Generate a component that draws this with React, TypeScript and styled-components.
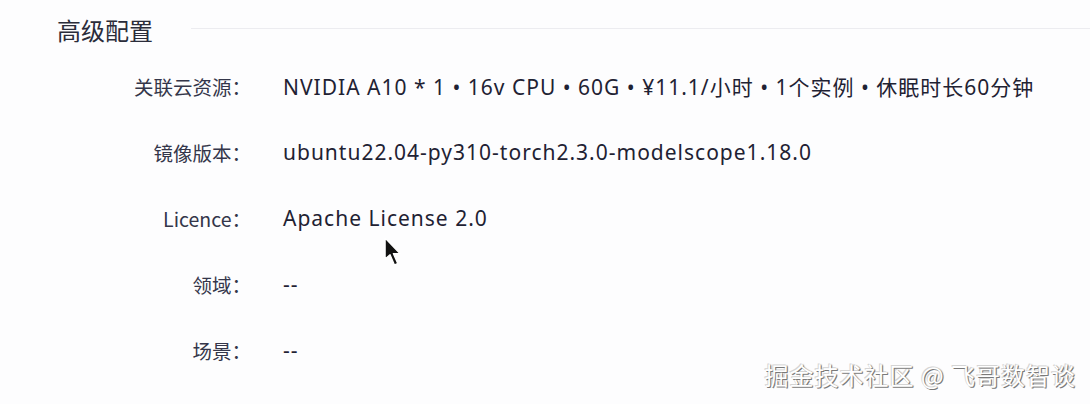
import React from "react";
import styled, { createGlobalStyle } from "styled-components";

const GlobalStyle = createGlobalStyle`
  html, body {
    margin: 0;
    padding: 0;
    background: #fdfdfe;
  }
  body {
    font-family: "Noto Sans", "Noto Sans CJK SC", sans-serif;
    color: #1f2233;
  }
`;

const Page = styled.div`
  position: relative;
  width: 1090px;
  height: 404px;
  overflow: hidden;
  background: #fdfdfe;
`;

const Header = styled.div`
  display: flex;
  align-items: center;
  height: 32px;
  padding: 14px 0 0 57px;
`;

const Title = styled.h2`
  margin: 0;
  font-family: "Noto Sans CJK SC", sans-serif;
  font-size: 24px;
  font-weight: 400;
  line-height: 32px;
  color: #2a2c3a;
`;

const Divider = styled.div`
  flex: 1;
  height: 1px;
  margin: -3px 0 0 38px;
  background: #ececf0;
`;

const Fields = styled.dl`
  display: grid;
  grid-template-columns: 251px 1fr;
  column-gap: 32px;
  grid-auto-rows: 66px;
  margin: 7px 0 0;
`;

const Label = styled.dt`
  display: flex;
  align-items: center;
  justify-content: flex-end;
  font-family: "Noto Sans CJK SC", sans-serif;
  font-size: 19.5px;
  color: #34364a;
`;

const Value = styled.dd`
  display: flex;
  align-items: center;
  margin: 0;
  font-family: "Noto Sans", "Noto Sans CJK SC", sans-serif;
  font-size: 21px;
  letter-spacing: 1px;
  color: #1f2233;
  white-space: nowrap;
`;

const Watermark = styled.div`
  position: absolute;
  right: 14px;
  bottom: 12px;
  font-family: "Noto Sans CJK SC", sans-serif;
  font-size: 24px;
  letter-spacing: 1px;
  color: #ffffff;
  text-shadow: 1px 1px 0 #7a7a7a, -1px -1px 0 #d4d4d4, 1px 0 1px #999999;
`;

const Cursor = styled.svg`
  position: absolute;
  left: 384px;
  top: 237px;
`;

const fields: [string, string][] = [
  ["关联云资源：", "NVIDIA A10 * 1 • 16v CPU • 60G • ¥11.1/小时 • 1个实例 • 休眠时长60分钟"],
  ["镜像版本：", "ubuntu22.04-py310-torch2.3.0-modelscope1.18.0"],
  ["Licence：", "Apache License 2.0"],
  ["领域：", "--"],
  ["场景：", "--"],
];

export default function App() {
  return (
    <Page>
      <GlobalStyle />
      <Header>
        <Title>高级配置</Title>
        <Divider />
      </Header>
      <Fields>
        {fields.map(([label, value]) => (
          <React.Fragment key={label}>
            <Label>{label}</Label>
            <Value>{value}</Value>
          </React.Fragment>
        ))}
      </Fields>
      <Cursor width="22" height="32" viewBox="0 0 20 29">
        <path
          d="M1 1 L1 20 L5.5 16 L9.5 25.5 L12.5 24 L8.5 15 L14.5 15 Z"
          fill="#111"
          stroke="#fff"
          strokeWidth="1.2"
          strokeLinejoin="round"
        />
      </Cursor>
      <Watermark>掘金技术社区 @ 飞哥数智谈</Watermark>
    </Page>
  );
}
